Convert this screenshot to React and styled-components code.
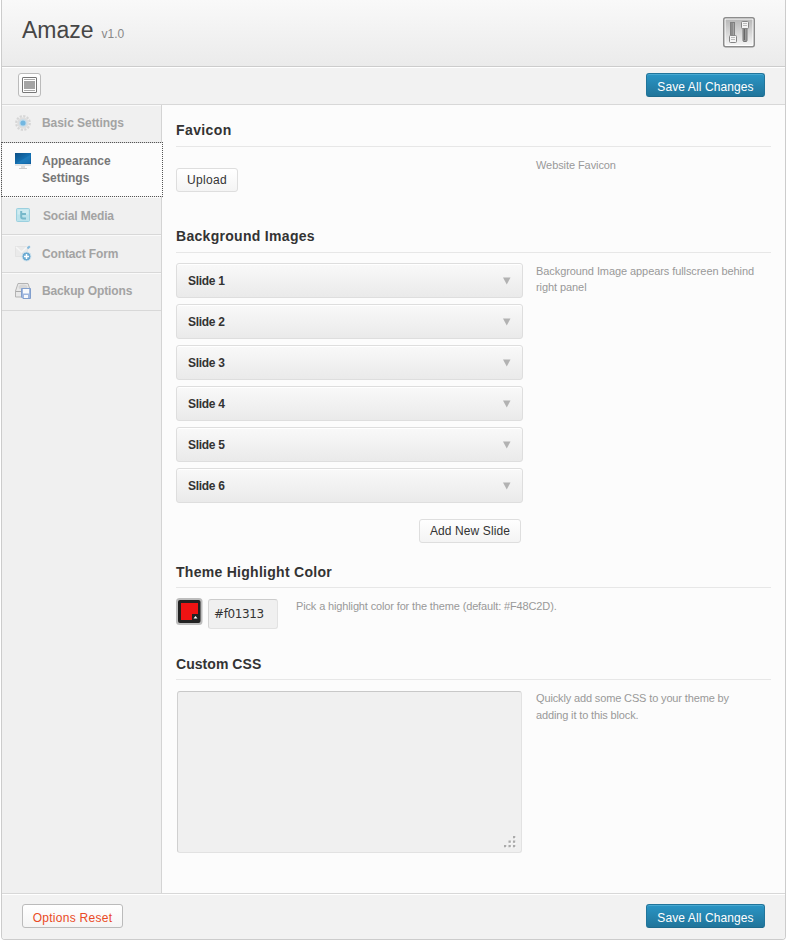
import React from "react";
import styled, { createGlobalStyle, css } from "styled-components";

const GlobalStyle = createGlobalStyle`
  *, *::before, *::after { box-sizing: border-box; }
  body {
    margin: 0;
    background: #fff;
    font-family: "Liberation Sans", Arial, sans-serif;
    font-size: 12px;
    color: #333;
  }
  h1, h3, p { margin: 0; }
  svg { display: block; flex: none; }
`;

const Panel = styled.main`
  width: 785px;
  height: 940px;
  margin-left: 1px;
  display: flex;
  flex-direction: column;
  border: 1px solid #ccc;
  border-top: 0;
  border-radius: 0 0 4px 4px;
`;

const Header = styled.header`
  height: 67px;
  padding: 0 30px 0 20px;
  display: flex;
  justify-content: space-between;
  align-items: flex-start;
  border-bottom: 1px solid #ccc;
  background: linear-gradient(#f9f9f9, #ebebeb);
`;

const Title = styled.h1`
  padding-top: 16px;
  font-size: 23px;
  line-height: 28px;
  font-weight: 400;
  color: #464646;
`;

const Version = styled.span`
  margin-left: 8px;
  font-size: 12px;
  color: #888;
`;

const HeaderIcon = styled.div`
  padding-top: 17px;
`;

const Bar = styled.div`
  flex: none;
  height: ${(p) => p.$height}px;
  padding: ${(p) => p.$top}px 20px 0 ${(p) => p.$left}px;
  display: flex;
  justify-content: space-between;
  align-items: flex-start;
  border-radius: ${(p) => (p.$last ? "0 0 3px 3px" : 0)};
  background: #f2f2f2;
  box-shadow: inset 0 1px #fff;
`;

const ExpandButton = styled.button`
  width: 23px;
  height: 24px;
  padding: 3px;
  border: 1px solid #bbb;
  border-radius: 3px;
  background: linear-gradient(#fff, #f5f5f5);
`;

const Button = styled.button`
  width: ${(p) => p.$width}px;
  height: 24px;
  padding: ${(p) => p.$drop || 0}px 0 0;
  border: 1px solid #dedede;
  border-radius: 3px;
  background: linear-gradient(#fff, #f4f4f4);
  font: 12px/20px "Liberation Sans", Arial, sans-serif;
  letter-spacing: ${(p) => p.$track || 0}px;
  color: #333;
  white-space: nowrap;
  ${(p) =>
    p.$kind === "primary" &&
    css`
      border-color: #21759b #21759b #1e6a8d;
      background: linear-gradient(#2a95c5, #21759b);
      box-shadow: inset 0 1px rgba(120, 200, 230, 0.4);
      color: #fff;
    `}
  ${(p) =>
    p.$kind === "reset" &&
    css`
      border-color: #bbb;
      color: #ea4a25;
    `}
`;

const Middle = styled.div`
  flex: 1;
  display: flex;
  border-top: 1px solid #d8d8d8;
  border-bottom: 1px solid #d8d8d8;
  background: #fcfcfc;
`;

const Sidebar = styled.nav`
  width: 160px;
  border-right: 1px solid #d4d4d4;
  background: #f0f0f0;
`;

const NavItem = styled.a`
  display: flex;
  height: 38px;
  padding: ${(p) => p.$top}px 0 0 13px;
  border-bottom: 1px solid #d8d8d8;
  box-shadow: inset 0 1px #fafafa;
  font-size: 12px;
  line-height: 17px;
  font-weight: 700;
  color: #a3a3a3;
  ${(p) =>
    p.$active &&
    css`
      position: relative;
      width: 160px;
      height: 53px;
      margin-bottom: 1px;
      border: 0;
      outline: 1px dotted #555;
      background: #fcfcfc;
      color: #777;
    `}
`;

const NavLabel = styled.span`
  width: 100px;
  margin-left: ${(p) => p.$gap || 11}px;
  padding-top: ${(p) => p.$drop || 0}px;
  letter-spacing: ${(p) => p.$track || 0}px;
`;

const Content = styled.div`
  flex: 1;
  padding: 0 14px;
`;

const Section = styled.section`
  height: ${(p) => p.$height}px;
`;

const Heading = styled.h3`
  height: 42px;
  padding-top: ${(p) => p.$top || 16}px;
  border-bottom: 1px solid #e7e7e7;
  font-size: 14px;
  line-height: 18px;
  font-weight: 700;
  letter-spacing: ${(p) => p.$track}px;
`;

const Columns = styled.div`
  display: flex;
  padding-top: 10px;
`;

const Field = styled.div`
  flex: none;
  width: ${(p) => p.$width || 360}px;
  padding: ${(p) => p.$inset || "0"};
`;

const Hint = styled.p`
  width: ${(p) => p.$width || 225}px;
  font-size: 11px;
  line-height: ${(p) => p.$line || 16}px;
  letter-spacing: ${(p) => p.$track ?? -0.08}px;
  color: #999;
`;

const SlideList = styled.div`
  display: grid;
  gap: 6px;
  width: 347px;
`;

const Slide = styled.div`
  height: 35px;
  padding: 0 11px;
  display: flex;
  align-items: center;
  justify-content: space-between;
  border: 1px solid #dedede;
  border-radius: 3px;
  background: linear-gradient(#f9f9f9, #eaeaea);
  box-shadow: inset 0 1px #fff;
  font-weight: 700;
  letter-spacing: -0.3px;
`;

const AddRow = styled.div`
  width: 345px;
  padding-top: 16px;
  display: flex;
  justify-content: flex-end;
`;

const ColorRow = styled.div`
  display: flex;
  gap: 5px;
`;

const ColorInput = styled.input`
  width: 70px;
  height: 30px;
  margin-top: 1px;
  padding: 0 5px 1px;
  border: 1px solid #e2e2e2;
  border-top-color: #ccc;
  border-left-color: #d4d4d4;
  border-radius: 3px;
  background: #f0f0f0;
  font: 12px "DejaVu Sans", sans-serif;
  letter-spacing: -0.38px;
  color: #333;
`;

const CssBox = styled.div`
  width: 345px;
  height: 162px;
  padding: 0 4px 4px 0;
  display: flex;
  align-items: flex-end;
  justify-content: flex-end;
  border: 1px solid #e2e2e2;
  border-top-color: #c8c8c8;
  border-left-color: #d0d0d0;
  border-radius: 3px;
  background: #f0f0f0;
`;

const SlidersIcon = () => (
  <svg width="32" height="31" viewBox="0 0 32 31">
    <defs>
      <linearGradient id="plate" x1="0" y1="0" x2="0" y2="1">
        <stop offset="0" stopColor="#b8b8b8" />
        <stop offset="1" stopColor="#f4f4f4" />
      </linearGradient>
    </defs>
    <rect x="0.75" y="0.75" width="30.5" height="29" rx="2" fill="#fff" stroke="#8c8c8c" strokeWidth="1.5" />
    <rect x="2.5" y="2.5" width="27" height="25.5" fill="url(#plate)" />
    <rect x="7.5" y="5.5" width="4" height="14" fill="#a4a4a4" stroke="#808080" />
    <path d="M9 6v12" stroke="#777" />
    <rect x="20" y="10" width="4" height="14.5" rx="1" fill="#999" stroke="#777" />
    <path d="M21.5 11v12" stroke="#666" />
    <rect x="6.5" y="18.5" width="7" height="7" rx="1" fill="#f4f4f4" stroke="#858585" />
    <path d="M8 20.500h4M8 22.500h4" stroke="#bbb" />
    <rect x="18.500" y="4.500" width="7" height="7" rx="1" fill="#f4f4f4" stroke="#858585" />
    <path d="M20 6.500h4M20 8.500h4" stroke="#bbb" />
  </svg>
);

const ExpandIcon = () => (
  <svg width="15" height="16" viewBox="0 0 15 16">
    <rect x="0.5" y="0.5" width="14" height="15" rx="0.5" fill="#fff" stroke="#777" />
    <path d="M2 2.5h11M2 13.5h11" stroke="#aaa" />
    <rect x="2" y="4" width="11" height="8" fill="#a4a4a4" />
  </svg>
);

const GearIcon = () => (
  <svg width="16" height="16" viewBox="0 0 16 16">
    <circle cx="8" cy="8" r="6.8" fill="none" stroke="#d6d6d6" strokeWidth="2.2" strokeDasharray="2.2 1.36" />
    <circle cx="8" cy="8" r="5.8" fill="#dedede" />
    <circle cx="8" cy="8" r="3.8" fill="#c4dceb" />
    <circle cx="8" cy="8" r="2.6" fill="#72b7e1" />
  </svg>
);

const MonitorIcon = () => (
  <svg width="16" height="16" viewBox="0 0 16 16">
    <defs>
      <linearGradient id="screen" x1="0" y1="0" x2="1" y2="1">
        <stop offset="0" stopColor="#0d4f85" />
        <stop offset="0.6" stopColor="#1472b4" />
        <stop offset="1" stopColor="#0d599b" />
      </linearGradient>
    </defs>
    <rect width="16" height="13" rx="0.6" fill="#e2e5e7" />
    <rect width="16" height="11" fill="url(#screen)" />
    <path d="M1 10.5 15 2v8.5z" fill="#2583c2" opacity=".5" />
    <path d="M6 13h4v2H6z" fill="#ddd" />
    <path d="M4 15.5h8" stroke="#ccc" />
  </svg>
);

const BirdIcon = () => (
  <svg width="16" height="16" viewBox="0 0 16 16">
    <rect x="1.5" y="1.5" width="13" height="13" rx="1" fill="#bce3ec" stroke="#9bd0df" />
    <path d="M2.5 2.5h11v5h-11z" fill="#cfebf1" />
    <path d="M6.2 4v5.8q0 1.7 1.7 1.7H11M6.2 7H11" fill="none" stroke="#77b8ca" strokeWidth="2" />
  </svg>
);

const MailIcon = () => (
  <svg width="17" height="17" viewBox="0 0 17 17">
    <path d="M.5 1.5h12v10H.5z" fill="#eaeaea" stroke="#e3e3e3" />
    <path d="m1 2 5.5 5L12 2" fill="none" stroke="#f6f6f6" strokeWidth="1.4" />
    <path d="m12.500 3.500 2.300-2.300" stroke="#83b9dc" strokeWidth="2" />
    <circle cx="11.500" cy="11.500" r="4.500" fill="#6baad2" stroke="#d5e5ee" />
    <path d="M11.5 9v5M9 11.5h5" stroke="#fff" strokeWidth="1.5" />
  </svg>
);

const DriveIcon = () => (
  <svg width="17" height="17" viewBox="0 0 17 17">
    <path d="M3 1.500h10l2.5 7.500v6H.5V9z" fill="#e8e8e8" stroke="#b3b3b3" />
    <ellipse cx="8" cy="5" rx="4.500" ry="2.600" fill="#d6d6d6" />
    <path d="M1 9.5h14" stroke="#aaa" />
    <path d="M6.5 6.500h9v10h-7.500l-1.500-1.500z" fill="#9fb7df" stroke="#829fcd" />
    <path d="M8 7h6v4.500H8zM9 13h4v3H9z" fill="#f8fafc" />
  </svg>
);

const Caret = () => (
  <svg width="9" height="8" viewBox="0 0 9 8">
    <path d="M1 .5h7.500L4.750 7.500z" fill="#b2b2b2" />
  </svg>
);

const Swatch = () => (
  <svg width="27" height="27" viewBox="0 0 27 27">
    <rect width="26.500" height="27" rx="3.500" fill="#bdbdbd" />
    <rect x="2" y="2" width="22.500" height="23" rx="2" fill="#222" />
    <path d="M5 5h17v11h-6v6H5z" fill="#f01313" />
    <path d="M17.500 20.500 19.500 18l2 2.500z" fill="#fff" />
  </svg>
);

const gripDots = [
  [10, 1],
  [5.5, 5.5],
  [10, 5.5],
  [1, 10],
  [5.5, 10],
  [10, 10],
];

const Grip = () => (
  <svg width="14" height="13" viewBox="0 0 14 13">
    {gripDots.map(([x, y]) => (
      <g key={`${x}-${y}`}>
        <rect x={x + 0.7} y={y + 0.7} width="2.3" height="2.3" fill="#fff" />
        <rect x={x} y={y} width="2.3" height="2.3" fill="#aaa" />
      </g>
    ))}
  </svg>
);

const SaveButton = () => (
  <Button $kind="primary" $width={119} $drop={3} $track={0.1}>
    Save All Changes
  </Button>
);

const navItems = [
  { label: "Basic Settings", Icon: GearIcon, top: 10, track: -0.05 },
  { label: "Appearance Settings", Icon: MonitorIcon, top: 10, active: true },
  { label: "Social Media", Icon: BirdIcon, top: 10, gap: 12, drop: 1, track: -0.15 },
  { label: "Contact Form", Icon: MailIcon, top: 10, gap: 10, drop: 1, track: -0.15 },
  { label: "Backup Options", Icon: DriveIcon, top: 9, gap: 10, drop: 1, track: -0.13 },
];

export default function App() {
  return (
    <>
      <GlobalStyle />
      <Panel>
        <Header>
          <Title>
            Amaze<Version>v1.0</Version>
          </Title>
          <HeaderIcon>
            <SlidersIcon />
          </HeaderIcon>
        </Header>
        <Bar $height={37} $top={6} $left={16}>
          <ExpandButton aria-label="Expand options">
            <ExpandIcon />
          </ExpandButton>
          <SaveButton />
        </Bar>
        <Middle>
          <Sidebar>
            {navItems.map(({ label, Icon, top, gap, drop, track, active }) => (
              <NavItem key={label} $top={top} $active={active}>
                <Icon />
                <NavLabel $gap={gap} $drop={drop} $track={track}>{label}</NavLabel>
              </NavItem>
            ))}
          </Sidebar>
          <Content>
            <Section $height={106}>
              <Heading $track={0.4}>Favicon</Heading>
              <Columns>
                <Field $inset="11px 0 0">
                  <Button $width={62} $track={0.33}>Upload</Button>
                </Field>
                <Hint>Website Favicon</Hint>
              </Columns>
            </Section>
            <Section $height={335}>
              <Heading $track={0.3}>Background Images</Heading>
              <Columns>
                <Field>
                  <SlideList>
                    {[1, 2, 3, 4, 5, 6].map((n) => (
                      <Slide key={n}>
                        Slide {n}
                        <Caret />
                      </Slide>
                    ))}
                  </SlideList>
                  <AddRow>
                    <Button $width={102} $track={0.1}>Add New Slide</Button>
                  </AddRow>
                </Field>
                <Hint>Background Image appears fullscreen behind right panel</Hint>
              </Columns>
            </Section>
            <Section $height={92}>
              <Heading $top={17} $track={0.28}>Theme Highlight Color</Heading>
              <Columns>
                <Field $width={120}>
                  <ColorRow>
                    <Swatch />
                    <ColorInput defaultValue="#f01313" aria-label="Highlight color" />
                  </ColorRow>
                </Field>
                <Hint $width={300} $track={-0.14}>
                  Pick a highlight color for the theme (default: #F48C2D).
                </Hint>
              </Columns>
            </Section>
            <Section $height={255}>
              <Heading $top={17} $track={0.05}>Custom CSS</Heading>
              <Columns>
                <Field $inset="1px 0 0 1px">
                  <CssBox>
                    <Grip />
                  </CssBox>
                </Field>
                <Hint $line={17} $track={-0.14}>
                  Quickly add some CSS to your theme by adding it to this block.
                </Hint>
              </Columns>
            </Section>
          </Content>
        </Middle>
        <Bar $height={45} $top={10} $left={20} $last>
          <Button $kind="reset" $width={101} $drop={3} $track={0.27}>Options Reset</Button>
          <SaveButton />
        </Bar>
      </Panel>
    </>
  );
}
